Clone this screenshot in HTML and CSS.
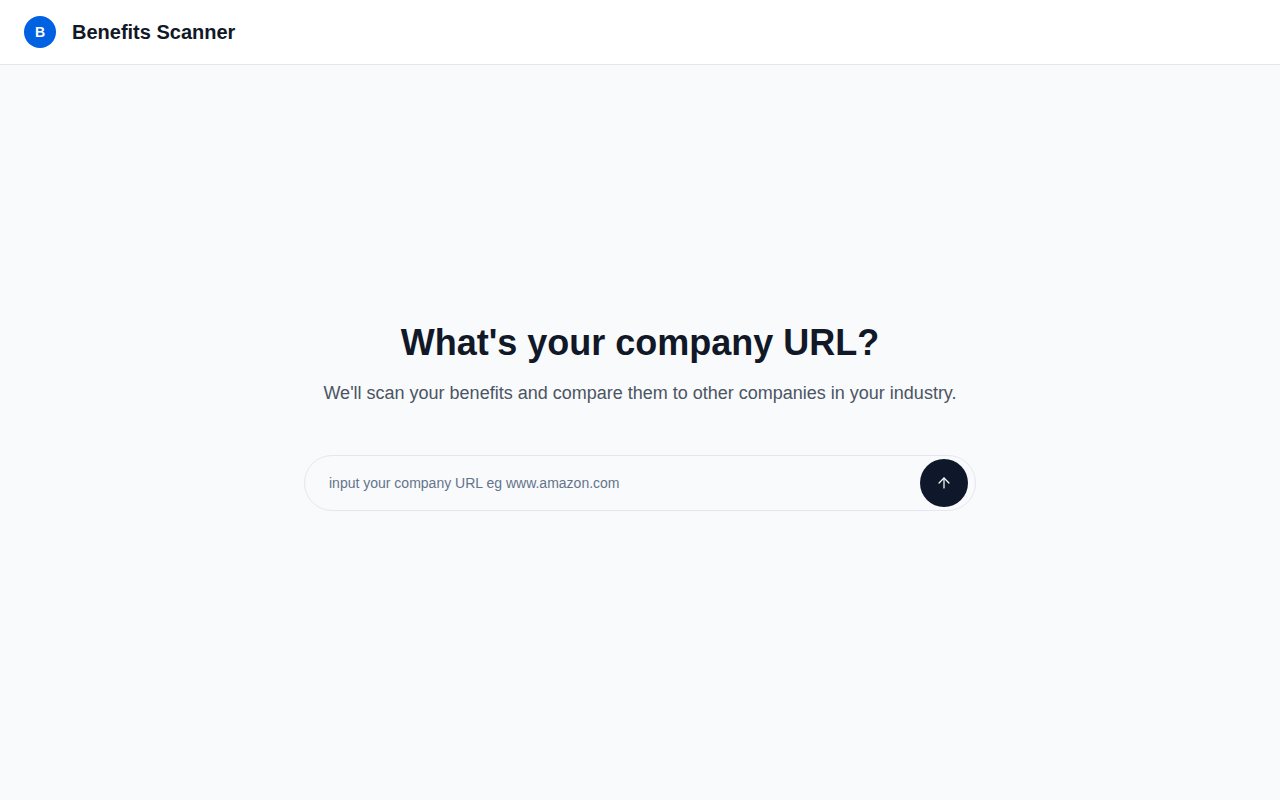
FILE: index.html
```html
<!DOCTYPE html>
<html lang="en">
<head>
<meta charset="utf-8">
<title>Benefits Scanner</title>
<link rel="stylesheet" href="styles.css">
</head>
<body>
<header class="header">
  <div class="logo">B</div>
  <span class="brand">Benefits Scanner</span>
</header>
<main class="main">
  <section class="hero">
    <h1 class="title">What's your company URL?</h1>
    <p class="subtitle">We'll scan your benefits and compare them to other companies in your industry.</p>
    <form class="search">
      <input class="field" type="text" placeholder="input your company URL eg www.amazon.com">
      <button class="submit" type="button" aria-label="Submit">
        <svg class="icon" viewBox="-0.7 -0.7 25.4 25.4" fill="none" stroke="currentColor" stroke-width="1.8" stroke-linecap="round" stroke-linejoin="round"><path d="m5 12 7-7 7 7"/><path d="M12 19V5"/></svg>
      </button>
    </form>
  </section>
</main>
</body>
</html>
```
FILE: styles.css
```css
* {
  box-sizing: border-box;
}

body {
  margin: 0;
  min-height: 100vh;
  display: flex;
  flex-direction: column;
  background: #f9fafc;
  color: #111827;
  font-family: "Liberation Sans", Arial, sans-serif;
}

.header {
  height: 65px;
  display: flex;
  align-items: center;
  gap: 16px;
  padding: 0 24px;
  background: #fff;
  border-bottom: 1px solid #e5e7eb;
}

.logo {
  width: 32px;
  height: 32px;
  display: flex;
  align-items: center;
  justify-content: center;
  border-radius: 50%;
  background: #0062e3;
  color: #fff;
  font-size: 14px;
  line-height: 20px;
  font-weight: 700;
}

.brand {
  font-size: 20px;
  line-height: 28px;
  font-weight: 700;
}

.main {
  flex: 1;
  display: flex;
  align-items: center;
  justify-content: center;
  padding: 0 24px 32px;
}

.hero {
  width: 672px;
  text-align: center;
}

.title {
  margin: 0 0 16px;
  font-size: 36px;
  line-height: 40px;
  font-weight: 700;
}

.subtitle {
  margin: 0 0 48px;
  color: #4b5563;
  font-size: 18px;
  line-height: 28px;
}

.search {
  height: 56px;
  display: flex;
  align-items: center;
  padding: 0 7px 0 24px;
  border: 1px solid #e4e7f0;
  border-radius: 28px;
}

.field {
  flex: 1;
  padding: 0;
  border: 0;
  outline: 0;
  background: transparent;
  color: #0f172a;
  font: 14px/20px "Liberation Sans", Arial, sans-serif;
}

.field::placeholder {
  color: #64748b;
}

.submit {
  width: 48px;
  height: 48px;
  display: flex;
  align-items: center;
  justify-content: center;
  padding: 0;
  border: 0;
  border-radius: 50%;
  background: #0f172a;
  color: #f8fafc;
}

.icon {
  width: 18px;
  height: 18px;
}
```
